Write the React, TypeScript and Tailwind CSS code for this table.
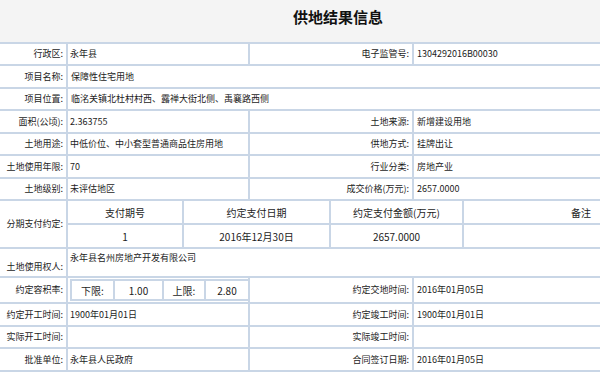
import React from 'react';

const LINE = 'border-[#c9d6e6]';

type Pair = { label: string; value?: string };

function Label({ text, className = '' }: { text: string; className?: string }) {
  return (
    <div className={`flex items-center justify-end pr-[3px] whitespace-nowrap border-r-2 ${LINE} ${className}`}>
      {text}:
    </div>
  );
}

function Value({ text, className = '', last = false }: { text?: string; className?: string; last?: boolean }) {
  return (
    <div className={`flex items-center whitespace-nowrap ${last ? 'pl-[3px]' : `pl-[2px] border-r-2 ${LINE}`} ${className}`}>
      {text}
    </div>
  );
}

// one row of the form: left pair + right pair, or a wide left value
function Row({ h, left, right }: { h: string; left: Pair; right?: Pair }) {
  return (
    <div className={`grid grid-cols-[68px_182px_164px_186px] border-b-2 ${LINE} ${h}`}>
      <Label text={left.label} />
      {right ? (
        <>
          <Value text={left.value} />
          <Label text={right.label} />
          <Value text={right.value} last />
        </>
      ) : (
        <Value text={left.value} className="col-span-3" last />
      )}
    </div>
  );
}

const payments = [{ no: '1', date: '2016年12月30日', amount: '2657.0000', note: '' }];

export default function App() {
  return (
    <div className="w-[600px] h-[376px] overflow-hidden bg-white text-[9px] text-[#1c1c1c] font-['Noto_Sans_CJK_SC',sans-serif]">
      {/* Title */}
      <div className="h-[42px] bg-[#f4f4f4] flex items-center justify-center pl-[76px] pb-[8px]">
        <h1 className="text-[15px] font-bold text-[#111]">供地结果信息</h1>
      </div>

      <div className={`border-t-2 ${LINE}`}>
        <Row h="h-[22px]" left={{ label: '行政区', value: '永年县' }} right={{ label: '电子监管号', value: '1304292016B00030' }} />
        <Row h="h-[23px]" left={{ label: '项目名称', value: '保障性住宅用地' }} />
        <Row h="h-[22px]" left={{ label: '项目位置', value: '临洺关镇北杜村村西、露禅大街北侧、禹襄路西侧' }} />
        <Row h="h-[23px]" left={{ label: '面积(公顷)', value: '2.363755' }} right={{ label: '土地来源', value: '新增建设用地' }} />
        <Row h="h-[22px]" left={{ label: '土地用途', value: '中低价位、中小套型普通商品住房用地' }} right={{ label: '供地方式', value: '挂牌出让' }} />
        <Row h="h-[23px]" left={{ label: '土地使用年限', value: '70' }} right={{ label: '行业分类', value: '房地产业' }} />
        <Row h="h-[22px]" left={{ label: '土地级别', value: '未评估地区' }} right={{ label: '成交价格(万元)', value: '2657.0000' }} />

        {/* Instalments */}
        <div className={`grid grid-cols-[68px_1fr] h-[48px] border-b-2 ${LINE}`}>
          <Label text="分期支付约定" />
          <div className="flex flex-col text-[10px]">
            <div className={`grid grid-cols-[116px_147px_133px_1fr] h-[24px] border-b-2 ${LINE}`}>
              <div className={`flex items-center justify-center border-r-2 ${LINE}`}>支付期号</div>
              <div className={`flex items-center justify-center border-r-2 ${LINE}`}>约定支付日期</div>
              <div className={`flex items-center justify-center border-r-2 ${LINE}`}>约定支付金额(万元)</div>
              <div className="flex items-center justify-end pr-[9px]">备注</div>
            </div>
            {payments.map((p) => (
              <div key={p.no} className="grid grid-cols-[116px_147px_133px_1fr] flex-1">
                <div className={`flex items-center justify-center border-r-2 ${LINE}`}>{p.no}</div>
                <div className={`flex items-center justify-center border-r-2 ${LINE}`}>{p.date}</div>
                <div className={`flex items-center justify-center border-r-2 ${LINE}`}>{p.amount}</div>
                <div className="flex items-center justify-end pr-[9px]">{p.note}</div>
              </div>
            ))}
          </div>
        </div>

        {/* Land user */}
        <div className={`grid grid-cols-[68px_1fr] h-[29px] border-b-2 ${LINE}`}>
          <div className={`flex items-start justify-end pt-[11px] pr-[3px] whitespace-nowrap border-r-2 ${LINE}`}>土地使用权人:</div>
          <div className="pl-[2px] pt-[2px] whitespace-nowrap">永年县名州房地产开发有限公司</div>
        </div>

        {/* Plot ratio */}
        <div className={`grid grid-cols-[68px_182px_164px_186px] h-[26px] border-b-2 ${LINE}`}>
          <Label text="约定容积率" />
          <div className={`pl-[2px] pt-[1px] border-r-2 ${LINE}`}>
            <div className={`grid grid-cols-[43px_49px_42px_1fr] h-[22px] border-2 border-r-0 ${LINE} text-[10px]`}>
              <div className={`flex items-center justify-center border-r-2 ${LINE}`}>下限:</div>
              <div className={`flex items-center justify-center border-r-2 ${LINE}`}>1.00</div>
              <div className={`flex items-center justify-center border-r-2 ${LINE}`}>上限:</div>
              <div className="flex items-center justify-center">2.80</div>
            </div>
          </div>
          <Label text="约定交地时间" />
          <Value text="2016年01月05日" last />
        </div>

        <Row h="h-[23px]" left={{ label: '约定开工时间', value: '1900年01月01日' }} right={{ label: '约定竣工时间', value: '1900年01月01日' }} />
        <Row h="h-[22px]" left={{ label: '实际开工时间', value: '' }} right={{ label: '实际竣工时间', value: '' }} />
        <Row h="h-[23px]" left={{ label: '批准单位', value: '永年县人民政府' }} right={{ label: '合同签订日期', value: '2016年01月05日' }} />
      </div>
    </div>
  );
}
